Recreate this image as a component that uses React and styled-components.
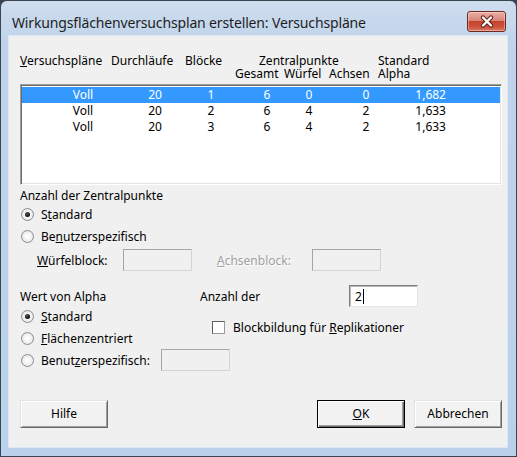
import styled, { createGlobalStyle } from "styled-components";

const GlobalStyle = createGlobalStyle`
  html, body {
    margin: 0;
    padding: 0;
    background: #3a434e;
  }
  body {
    font-family: "Noto Sans", "Open Sans", sans-serif;
  }
`;

const rows = [
  { design: "Voll", runs: 20, blocks: 1, total: 6, cube: 0, axial: 0, alpha: "1,682" },
  { design: "Voll", runs: 20, blocks: 2, total: 6, cube: 4, axial: 2, alpha: "1,633" },
  { design: "Voll", runs: 20, blocks: 3, total: 6, cube: 4, axial: 2, alpha: "1,633" },
];

const Window = styled.div`
  box-sizing: border-box;
  width: 517px;
  height: 457px;
  border: 1px solid #3b4654;
  border-radius: 7px 7px 0 0;
  background: linear-gradient(#cfddee, #bfd4eb 40px, #b9d1ea);
  display: flex;
  flex-direction: column;
  padding: 0 8px 8px 7px;
`;

const TitleBar = styled.div`
  height: 34px;
  margin: 0 -8px 0 -7px;
  padding: 10px 10px 0 11px;
  box-sizing: border-box;
  display: flex;
  align-items: flex-start;
  justify-content: space-between;
`;

const Title = styled.div`
  margin-top: 2px;
  font-size: 14px;
  line-height: 20px;
  color: #1e1e1e;
  letter-spacing: -0.15px;
`;

const CloseButton = styled.div`
  box-sizing: border-box;
  width: 39px;
  height: 21px;
  border: 1px solid #6e2a20;
  border-radius: 3px;
  background: linear-gradient(#eab0a4 0%, #d9857a 45%, #c5422d 50%, #cc5540 80%, #dc7c62 100%);
  box-shadow: inset 0 0 0 1px rgba(255, 255, 255, 0.35);
  display: flex;
  align-items: center;
  justify-content: center;
`;

const Client = styled.div`
  box-sizing: border-box;
  height: 413px;
  background: #f0f0f0;
  border: 1px solid #dce7f3;
  padding: 18px 5px 19px 11px;
  display: flex;
  flex-direction: column;
  font-size: 12px;
  color: #000;
`;

const Header = styled.div`
  display: grid;
  grid-template-columns: 91px 74px 50px 49px 45px 49px 1fr;
  grid-template-rows: 13px 13px;
  line-height: 13px;
  white-space: nowrap;
`;

const HeadCell = styled.div`
  grid-column: ${(p) => p.$col} / span ${(p) => p.$span || 1};
  grid-row: ${(p) => p.$row};
  padding-left: ${(p) => p.$indent || 0}px;
`;

const ListBox = styled.div`
  box-sizing: border-box;
  margin-top: 4px;
  height: 101px;
  background: #fff;
  border: 1px solid;
  border-color: #a0a0a0 #fff #fff #a0a0a0;
  box-shadow: inset 1px 1px 0 #696969, inset -1px -1px 0 #e3e3e3;
  padding: 2px 1px;
`;

const ListRow = styled.div`
  display: grid;
  grid-template-columns: 122px 22px 90px 22px 62px 52px 54px;
  height: 16px;
  line-height: 16px;
  white-space: nowrap;
  background: ${(p) => (p.$selected ? "#3399ff" : "transparent")};
  color: ${(p) => (p.$selected ? "#fff" : "#000")};
`;

const ListCell = styled.div`
  display: flex;
  justify-content: ${(p) => (p.$right ? "flex-end" : "center")};
`;

const GroupLabel = styled.div`
  margin-top: ${(p) => p.$top || 0}px;
  line-height: ${(p) => p.$lh || 15}px;
  white-space: nowrap;
`;

const OptionRow = styled.div`
  height: 22px;
  display: flex;
  align-items: center;
  white-space: nowrap;
`;

const RadioCircle = styled.span`
  box-sizing: border-box;
  position: relative;
  flex: none;
  width: 13px;
  height: 13px;
  margin-left: 1px;
  margin-right: 7px;
  border-radius: 50%;
  border: 1px solid #8b8d8f;
  background: radial-gradient(circle at 50% 50%, #ffffff 0, #f4f4f4 45%, #d6d7d9 100%);
  &::after {
    content: "";
    display: ${(p) => (p.$checked ? "block" : "none")};
    position: absolute;
    left: 3px;
    top: 3px;
    width: 5px;
    height: 5px;
    border-radius: 50%;
    background: radial-gradient(circle at 40% 35%, #5a5a5a 0, #111 60%, #000 100%);
  }
`;

const OptionLabel = styled.span`
  display: inline-block;
  flex: none;
  width: ${(p) => (p.$width ? `${p.$width}px` : "auto")};
`;

const BlockRow = styled.div`
  margin-top: 2px;
  height: 22px;
  padding-left: 17px;
  display: flex;
  align-items: center;
  white-space: nowrap;
`;

const FieldLabel = styled.span`
  width: ${(p) => p.$width}px;
  flex: none;
  margin-left: ${(p) => p.$gap || 0}px;
  color: ${(p) => (p.$disabled ? "#a0a0a0" : "#000")};
  text-shadow: ${(p) => (p.$disabled ? "1px 1px 0 #fff" : "none")};
`;

const TextBox = styled.div`
  box-sizing: border-box;
  flex: none;
  width: 69px;
  height: 22px;
  background: ${(p) => (p.$disabled ? "#f0f0f0" : "#fff")};
  border: 1px solid;
  border-color: ${(p) =>
    p.$disabled ? "#a5a5a5 #d4d4d4 #d4d4d4 #a5a5a5" : "#7f7f7f #e3e3e3 #e3e3e3 #7f7f7f"};
  box-shadow: ${(p) => (p.$disabled ? "none" : "inset 1px 1px 0 #b9b9b9")};
  padding-left: 5px;
  display: flex;
  align-items: center;
  font-size: 12px;
`;

const Caret = styled.span`
  display: inline-block;
  width: 1px;
  height: 15px;
  margin-left: 1px;
  background: #000;
`;

const Lower = styled.div`
  margin-top: 14px;
  display: flex;
`;

const LeftColumn = styled.div`
  width: 180px;
  display: flex;
  flex-direction: column;
`;

const RightColumn = styled.div`
  display: flex;
  flex-direction: column;
`;

const CheckRow = styled.div`
  margin-top: 14px;
  padding-left: 12px;
  height: 13px;
  display: flex;
  align-items: center;
  white-space: nowrap;
`;

const CheckBox = styled.span`
  box-sizing: border-box;
  flex: none;
  width: 13px;
  height: 13px;
  margin-right: 8px;
  background: #fff;
  border: 1px solid;
  border-color: #5e5e5e #9a9a9a #9a9a9a #5e5e5e;
`;

const Footer = styled.div`
  margin-top: auto;
  display: flex;
  gap: 9px;
`;

const Spacer = styled.div`
  flex: 1;
`;

const Button = styled.div`
  box-sizing: border-box;
  width: 88px;
  height: 28px;
  background: #f2f2f2;
  border: 1px solid;
  border-color: ${(p) => (p.$default ? "#000" : "#e3e3e3 #696969 #696969 #e3e3e3")};
  box-shadow: ${(p) =>
    p.$default
      ? "inset 1px 1px 0 #fff, inset -1px -1px 0 #696969, inset -2px -2px 0 #a0a0a0"
      : "inset 1px 1px 0 #fff, inset -1px -1px 0 #a0a0a0"};
  display: flex;
  align-items: center;
  justify-content: center;
  font-size: 12px;
  padding-bottom: 1px;
`;

const CloseIcon = () => (
  <svg width="16" height="13" viewBox="0 0 16 13">
    <path d="M4 2.5 L12 10.5 M12 2.5 L4 10.5" stroke="#5b1d14" strokeWidth="4.2" strokeLinecap="round" fill="none" />
    <path d="M4 2.5 L12 10.5 M12 2.5 L4 10.5" stroke="#fff" strokeWidth="2.4" strokeLinecap="round" fill="none" />
  </svg>
);

export default function App() {
  return (
    <>
      <GlobalStyle />
      <Window>
        <TitleBar>
          <Title>Wirkungsflächenversuchsplan erstellen: Versuchspläne</Title>
          <CloseButton>
            <CloseIcon />
          </CloseButton>
        </TitleBar>
        <Client>
          <Header>
            <HeadCell $col={1} $row={1}>
              <u>V</u>ersuchspläne
            </HeadCell>
            <HeadCell $col={2} $row={1}>Durchläufe</HeadCell>
            <HeadCell $col={3} $row={1}>Blöcke</HeadCell>
            <HeadCell $col={4} $span={3} $row={1} $indent={24}>Zentralpunkte</HeadCell>
            <HeadCell $col={7} $row={1}>Standard</HeadCell>
            <HeadCell $col={4} $row={2}>Gesamt</HeadCell>
            <HeadCell $col={5} $row={2}>Würfel</HeadCell>
            <HeadCell $col={6} $row={2}>Achsen</HeadCell>
            <HeadCell $col={7} $row={2}>Alpha</HeadCell>
          </Header>

          <ListBox>
            {rows.map((r, i) => (
              <ListRow key={i} $selected={i === 0}>
                <ListCell>{r.design}</ListCell>
                <ListCell>{r.runs}</ListCell>
                <ListCell>{r.blocks}</ListCell>
                <ListCell>{r.total}</ListCell>
                <ListCell>{r.cube}</ListCell>
                <ListCell>{r.axial}</ListCell>
                <ListCell $right>{r.alpha}</ListCell>
              </ListRow>
            ))}
          </ListBox>

          <GroupLabel $top={3}>Anzahl der Zentralpunkte</GroupLabel>
          <OptionRow>
            <RadioCircle $checked />
            <OptionLabel>
              S<u>t</u>andard
            </OptionLabel>
          </OptionRow>
          <OptionRow>
            <RadioCircle />
            <OptionLabel>
              Be<u>n</u>utzerspezifisch
            </OptionLabel>
          </OptionRow>
          <BlockRow>
            <FieldLabel $width={86}>
              <u>W</u>ürfelblock:
            </FieldLabel>
            <TextBox $disabled />
            <FieldLabel $width={95} $gap={25} $disabled>
              <u>A</u>chsenblock:
            </FieldLabel>
            <TextBox $disabled />
          </BlockRow>

          <Lower>
            <LeftColumn>
              <GroupLabel $top={4} $lh={16}>Wert von Alpha</GroupLabel>
              <OptionRow>
                <RadioCircle $checked />
                <OptionLabel>
                  <u>S</u>tandard
                </OptionLabel>
              </OptionRow>
              <OptionRow>
                <RadioCircle />
                <OptionLabel>
                  <u>F</u>lächenzentriert
                </OptionLabel>
              </OptionRow>
              <OptionRow>
                <RadioCircle />
                <OptionLabel $width={120}>
                  Benut<u>z</u>erspezifisch:
                </OptionLabel>
                <TextBox $disabled />
              </OptionRow>
            </LeftColumn>
            <RightColumn>
              <OptionRow>
                <FieldLabel $width={149}>Anzahl der</FieldLabel>
                <TextBox>
                  2<Caret />
                </TextBox>
              </OptionRow>
              <CheckRow>
                <CheckBox />
                <span>
                  Blockbildung für <u>R</u>eplikationer
                </span>
              </CheckRow>
            </RightColumn>
          </Lower>

          <Footer>
            <Button>Hilfe</Button>
            <Spacer />
            <Button $default>
              <span>
                <u>O</u>K
              </span>
            </Button>
            <Button>Abbrechen</Button>
          </Footer>
        </Client>
      </Window>
    </>
  );
}
